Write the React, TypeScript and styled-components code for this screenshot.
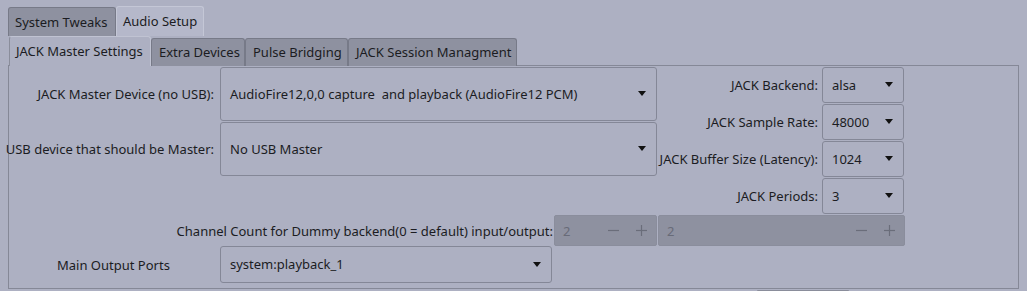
import React from 'react';
import styled, { createGlobalStyle } from 'styled-components';

const GlobalStyle = createGlobalStyle`
    html, body {
        margin: 0;
        padding: 0;
        background: #adb0c2;
        height: 100%;
        overflow: hidden;
    }
    body {
        font-family: "Noto Sans", "DejaVu Sans", sans-serif;
        font-size: 13px;
        color: #1b1c22;
    }
`;

const Window = styled.div`
    width: 1027px;
    height: 291px;
    padding: 6px 0 0 8px;
    box-sizing: border-box;
`;

const TabBar = styled.div<{ $inner?: boolean }>`
    display: flex;
    align-items: flex-end;
    height: 30px;
    margin-left: ${p => (p.$inner ? 1 : 0)}px;
`;

const Tab = styled.div<{ $active?: boolean; $w: number }>`
    box-sizing: border-box;
    width: ${p => p.$w}px;
    height: ${p => (p.$active ? 30 : 29)}px;
    display: flex;
    align-items: center;
    padding-left: 6px;
    padding-bottom: 1px;
    white-space: nowrap;
    border: 1px solid ${p => (p.$active ? '#c4c7d6' : '#777a88')};
    border-bottom: none;
    border-radius: 3px 3px 0 0;
    background: ${p => (p.$active ? '#b5b8ca' : '#8e91a0')};
    margin-top: ${p => (p.$active ? 0 : 1)}px;
    position: relative;
    z-index: ${p => (p.$active ? 2 : 1)};
`;

const InnerTab = styled(Tab)`
    padding-left: ${p => (p.$active ? 6 : 7)}px;
    ${p => (p.$active ? 'border-color: #c0c3d2; background: #adb0c2; border-left-color: #8a8d9b;' : 'height: 28px;')}
`;

const Pane = styled.div`
    box-sizing: border-box;
    width: 1011px;
    height: 224px;
    margin-top: -1px;
    border: 1px solid #858897;
    padding: 1px 0 0 1px;
`;

const Top = styled.div`
    display: flex;
    align-items: flex-start;
`;

const LeftColumn = styled.div`
    display: flex;
    flex-direction: column;
    gap: 1px;
`;

const LeftRow = styled.div<{ $h: number }>`
    display: flex;
    align-items: center;
    height: ${p => p.$h}px;
`;

const LeftLabel = styled.div`
    width: 204px;
    display: flex;
    justify-content: flex-end;
    white-space: nowrap;
    margin-right: 6px;
`;

const Combo = styled.div<{ $w: number; $h: number }>`
    box-sizing: border-box;
    width: ${p => p.$w}px;
    height: ${p => p.$h}px;
    border: 1px solid #848797;
    border-radius: 3px;
    display: flex;
    align-items: center;
    justify-content: space-between;
    padding: 0 10px 1px 9px;
    white-space: pre;
`;

const Arrow = styled.span`
    width: 0;
    height: 0;
    border-left: 4.5px solid transparent;
    border-right: 4.5px solid transparent;
    border-top: 5px solid #111;
`;

const RightColumn = styled.div`
    display: flex;
    flex-direction: column;
    gap: 1px;
    margin-left: 1px;
`;

const RightRow = styled.div`
    display: flex;
    align-items: center;
    height: 36px;
`;

const RightLabel = styled.div`
    width: 160px;
    display: flex;
    justify-content: flex-end;
    white-space: nowrap;
    margin-right: 4px;
`;

const ChannelRow = styled.div`
    display: flex;
    align-items: center;
    height: 31px;
    margin-top: 1px;
`;

const ChannelLabel = styled.div`
    width: 543px;
    display: flex;
    justify-content: flex-end;
    white-space: nowrap;
    margin-right: 1px;
`;

const Spin = styled.div<{ $w: number }>`
    box-sizing: border-box;
    width: ${p => p.$w}px;
    height: 31px;
    background: #8e91a0;
    border: 1px solid #8a8d9c;
    border-radius: 2px;
    margin-right: 1px;
    display: flex;
    align-items: center;
    padding: 0 8px 0 8px;
    color: #686b78;
`;

const SpinValue = styled.span`
    flex: 1;
`;

const SpinButton = styled.svg`
    width: 13px;
    height: 13px;
    margin-left: 15px;
    &:first-of-type {
        margin-left: 0;
    }
`;

const OutputRow = styled.div`
    display: flex;
    align-items: center;
    height: 37px;
`;

const OutputLabel = styled.div`
    width: 210px;
    box-sizing: border-box;
    padding-left: 47px;
    white-space: nowrap;
`;

const Scroll = styled.div`
    width: 92px;
    height: 2px;
    margin: 1px 0 0 749px;
    background: #8a8d9b;
    border-radius: 1px;
`;

const Minus = () => (
    <SpinButton viewBox="0 0 13 13">
        <line x1="1" y1="6.5" x2="12" y2="6.5" stroke="#6a6d7a" strokeWidth="1.2" />
    </SpinButton>
);

const Plus = () => (
    <SpinButton viewBox="0 0 13 13">
        <line x1="1" y1="6.5" x2="12" y2="6.5" stroke="#6a6d7a" strokeWidth="1.2" />
        <line x1="6.5" y1="1" x2="6.5" y2="12" stroke="#6a6d7a" strokeWidth="1.2" />
    </SpinButton>
);

const rightRows = [
    { label: 'JACK Backend:', value: 'alsa' },
    { label: 'JACK Sample Rate:', value: '48000' },
    { label: 'JACK Buffer Size (Latency):', value: '1024' },
    { label: 'JACK Periods:', value: '3' },
];

export default function App() {
    return (
        <Window>
            <GlobalStyle />
            <TabBar>
                <Tab $w={108}>System Tweaks</Tab>
                <Tab $w={88} $active>Audio Setup</Tab>
            </TabBar>
            <TabBar $inner>
                <InnerTab $w={142} $active>JACK Master Settings</InnerTab>
                <InnerTab $w={94}>Extra Devices</InnerTab>
                <InnerTab $w={103}>Pulse Bridging</InnerTab>
                <InnerTab $w={169}>JACK Session Managment</InnerTab>
            </TabBar>
            <Pane>
                <Top>
                    <LeftColumn>
                        <LeftRow $h={54}>
                            <LeftLabel>JACK Master Device (no USB):</LeftLabel>
                            <Combo $w={437} $h={54}>
                                <span>AudioFire12,0,0 capture  and playback (AudioFire12 PCM)</span>
                                <Arrow />
                            </Combo>
                        </LeftRow>
                        <LeftRow $h={54}>
                            <LeftLabel>USB device that should be Master:</LeftLabel>
                            <Combo $w={437} $h={54}>
                                <span>No USB Master</span>
                                <Arrow />
                            </Combo>
                        </LeftRow>
                    </LeftColumn>
                    <RightColumn>
                        {rightRows.map(r => (
                            <RightRow key={r.label}>
                                <RightLabel>{r.label}</RightLabel>
                                <Combo $w={82} $h={36}>
                                    <span>{r.value}</span>
                                    <Arrow />
                                </Combo>
                            </RightRow>
                        ))}
                    </RightColumn>
                </Top>
                <ChannelRow>
                    <ChannelLabel>Channel Count for Dummy backend(0 = default) input/output:</ChannelLabel>
                    <Spin $w={103}>
                        <SpinValue>2</SpinValue>
                        <Minus />
                        <Plus />
                    </Spin>
                    <Spin $w={247}>
                        <SpinValue>2</SpinValue>
                        <Minus />
                        <Plus />
                    </Spin>
                </ChannelRow>
                <OutputRow>
                    <OutputLabel>Main Output Ports</OutputLabel>
                    <Combo $w={332} $h={37}>
                        <span>system:playback_1</span>
                        <Arrow />
                    </Combo>
                </OutputRow>
            </Pane>
            <Scroll />
        </Window>
    );
}
